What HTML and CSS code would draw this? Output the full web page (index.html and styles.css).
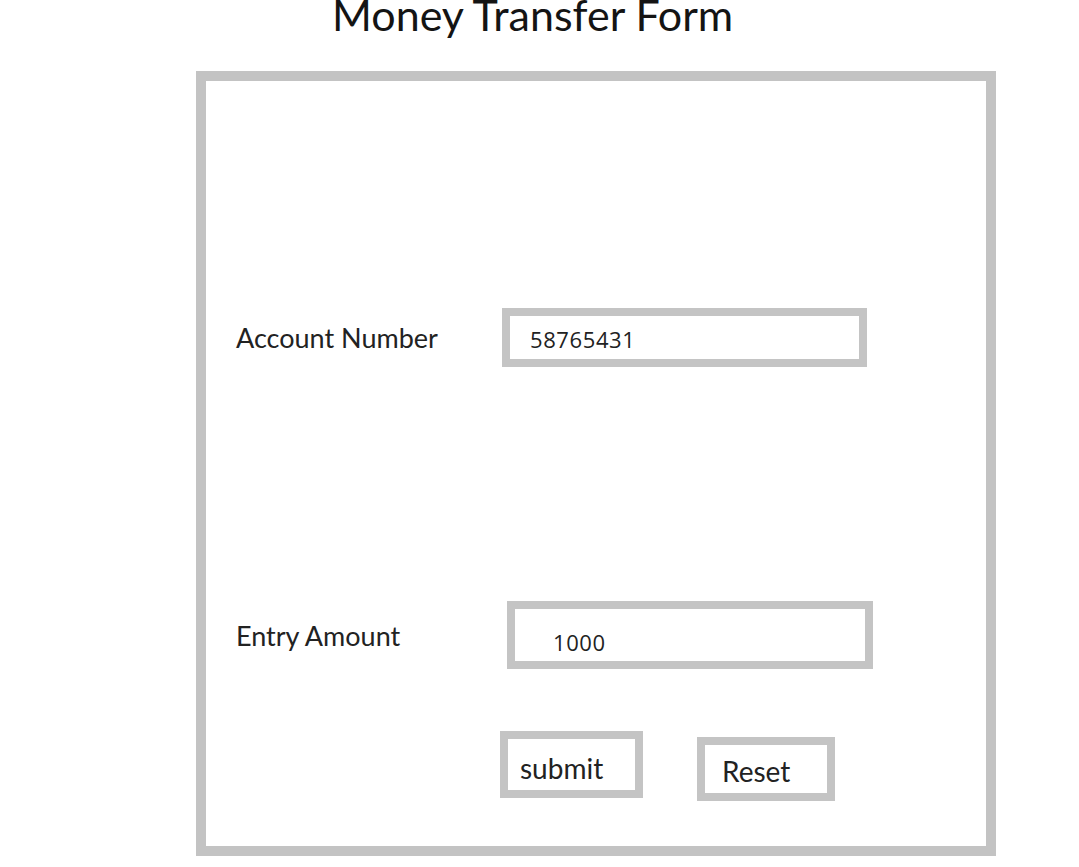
FILE: index.html
```html
<!DOCTYPE html>
<html>
<head>
<meta charset="utf-8">
<title>Money Transfer Form</title>
<link rel="stylesheet" href="styles.css">
</head>
<body>
<h1 class="title">Money Transfer Form</h1>
<form class="frame">
  <div class="row row-account">
    <label class="label">Account Number</label>
    <div class="field field-account"><span class="value">58765431</span></div>
  </div>
  <div class="row row-amount">
    <label class="label">Entry Amount</label>
    <div class="field field-amount"><span class="value">1000</span></div>
  </div>
  <div class="actions">
    <button type="button" class="btn btn-submit">submit</button>
    <button type="button" class="btn btn-reset">Reset</button>
  </div>
</form>
</body>
</html>
```
FILE: styles.css
```css
html, body {
  margin: 0;
  padding: 0;
  background: #ffffff;
}
body {
  width: 1079px;
  height: 867px;
  overflow: hidden;
  font-family: Lato, "Open Sans", sans-serif;
  color: #1f1f1f;
}
.title {
  margin: -10px 0 0 332px;
  height: 50px;
  font-size: 43px;
  line-height: 50px;
  font-weight: 400;
  color: #141414;
  white-space: nowrap;
}
.frame {
  box-sizing: border-box;
  margin: 31px 0 0 196px;
  width: 800px;
  height: 785px;
  border: 10px solid #c3c3c3;
  padding: 227px 0 0 30px;
}
.row {
  display: flex;
  align-items: center;
}
.label {
  width: 266px;
  flex: none;
  font-size: 27px;
  color: #222;
  white-space: nowrap;
}
.field {
  box-sizing: border-box;
  border: 8px solid #c4c4c4;
  display: flex;
  align-items: center;
  font-family: "Open Sans", sans-serif;
  font-size: 22px;
  letter-spacing: 0.6px;
  color: #222;
}
.field-account {
  width: 365px;
  height: 59px;
  padding: 2px 0 0 20px;
}
.row-amount {
  margin-top: 234px;
}
.field-amount {
  margin-left: 5px;
  width: 366px;
  height: 68px;
  padding: 14px 0 0 38px;
}
.actions {
  display: flex;
  align-items: flex-start;
  margin: 62px 0 0 264px;
  gap: 54px;
}
.btn {
  box-sizing: border-box;
  border: 8px solid #c4c4c4;
  background: #fff;
  font-family: Lato, "Open Sans", sans-serif;
  font-size: 28px;
  color: #222;
  text-align: left;
  padding: 0 0 0 12px;
  margin: 0;
  white-space: nowrap;
}
.btn-submit {
  width: 143px;
  height: 67px;
  padding-top: 6px;
}
.btn-reset {
  margin-top: 6px;
  width: 138px;
  height: 64px;
  padding-left: 17px;
  padding-top: 4px;
}
```
